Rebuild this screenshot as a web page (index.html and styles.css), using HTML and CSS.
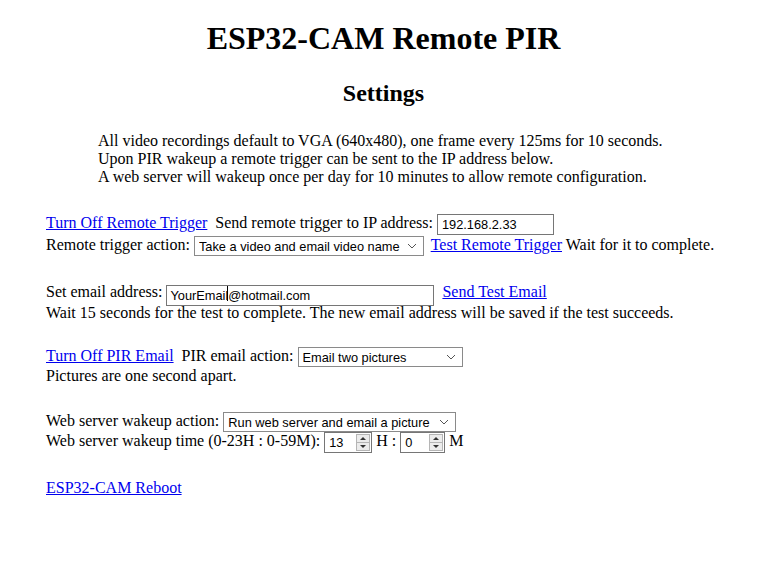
FILE: index.html
```html
<!DOCTYPE html>
<html>
<head>
<meta charset="utf-8">
<title>ESP32-CAM Remote PIR</title>
<link rel="stylesheet" href="styles.css">
</head>
<body>
<h1 class="title">ESP32-CAM Remote PIR</h1>
<h2 class="subtitle">Settings</h2>
<div class="intro">
  <div>All video recordings default to VGA (640x480), one frame every 125ms for 10 seconds.</div>
  <div>Upon PIR wakeup a remote trigger can be sent to the IP address below.</div>
  <div>A web server will wakeup once per day for 10 minutes to allow remote configuration.</div>
</div>
<div class="form">
  <div class="group g1">
    <div class="row r22"><a href="#">Turn Off Remote Trigger</a>&nbsp; Send remote trigger to IP address: <input class="ctl ip" type="text" value="192.168.2.33"></div>
    <div class="row r22">Remote trigger action: <select class="ctl sel sel-trigger"><option>Take a video and email video name</option></select> <a href="#">Test Remote Trigger</a> Wait for it to complete.</div>
  </div>
  <div class="group g2">
    <div class="row r22">Set email address: <span class="caretwrap"><input class="ctl email" type="text" value="YourEmail@hotmail.com"></span>&nbsp; <a href="#">Send Test Email</a></div>
    <div class="row r20">Wait 15 seconds for the test to complete. The new email address will be saved if the test succeeds.</div>
  </div>
  <div class="group g3">
    <div class="row r20"><a href="#">Turn Off PIR Email</a>&nbsp; PIR email action: <select class="ctl sel sel-pir"><option>Email two pictures</option></select></div>
    <div class="row r20">Pictures are one second apart.</div>
  </div>
  <div class="group g4">
    <div class="row r20">Web server wakeup action: <select class="ctl sel sel-web"><option>Run web server and email a picture</option></select></div>
    <div class="row r20">Web server wakeup time (0-23H : 0-59M): <span class="num num-h"><input class="numin" type="text" value="13"><span class="spin"><span class="up"></span><span class="down"></span></span></span> H : <span class="num num-m"><input class="numin" type="text" value="0"><span class="spin"><span class="up"></span><span class="down"></span></span></span> M</div>
  </div>
  <div class="group g5">
    <div class="row r20"><a href="#">ESP32-CAM Reboot</a></div>
  </div>
</div>
</body>
</html>
```
FILE: styles.css
```css
html, body {
  margin: 0;
  padding: 0;
  background: #fff;
}
body {
  font-family: "Liberation Serif", "Times New Roman", serif;
  font-size: 16px;
  color: #000;
}
a {
  color: #0000ee;
  text-decoration: underline;
}
.title {
  font-size: 32px;
  font-weight: bold;
  line-height: 36px;
  margin: 20px 0 0 0;
  text-align: center;
}
.subtitle {
  font-size: 24px;
  font-weight: bold;
  line-height: 28px;
  margin: 23px 0 0 0;
  text-align: center;
}
.intro {
  margin: 25px 0 0 0;
  padding-left: 98px;
  line-height: 18px;
}
.form {
  padding-left: 46px;
}
.row {
  white-space: nowrap;
}
.r22 { height: 22px; line-height: 22px; }
.r20 { height: 20px; line-height: 20px; }
.g1 { margin-top: 26px; }
.g2 { margin-top: 25px; }
.g3 { margin-top: 23px; }
.g4 { margin-top: 25px; }
.g5 { margin-top: 27px; }

.ctl {
  font-family: "Liberation Sans", Arial, sans-serif;
  font-size: 12.8px;
  color: #000;
  background: #fff;
  border: 1px solid #767676;
  border-radius: 0;
  box-sizing: border-box;
  margin: 0;
  vertical-align: middle;
  outline: none;
}
.ip {
  width: 117px;
  height: 21px;
  padding: 0 4px;
}
.email {
  width: 268px;
  height: 21px;
  padding: 0 3px;
}
.caretwrap {
  position: relative;
  display: inline-block;
  vertical-align: middle;
  height: 21px;
  line-height: 21px;
}
.caretwrap::after {
  content: "";
  position: absolute;
  left: 61px;
  top: 3px;
  width: 1px;
  height: 15px;
  background: #000;
}
.sel {
  -webkit-appearance: none;
  appearance: none;
  height: 20px;
  padding: 0 18px 0 4px;
  background-color: #fff;
  background-image: url("data:image/svg+xml;utf8,<svg xmlns='http://www.w3.org/2000/svg' width='10' height='6' viewBox='0 0 10 6'><path d='M1 1 L5 5 L9 1' fill='none' stroke='%23555' stroke-width='1'/></svg>");
  background-repeat: no-repeat;
  background-position: right 6px center;
  border-color: #8a8a8a;
}
.sel-trigger { width: 230px; margin-right: 3px; }
.sel-pir { width: 165px; }
.sel-web { width: 233px; }

.num {
  display: inline-flex;
  align-items: center;
  box-sizing: border-box;
  height: 21px;
  border: 1px solid #767676;
  background: #fff;
  vertical-align: middle;
  padding: 0 1px 0 4px;
}
.num-h { width: 48px; }
.num-m { width: 45px; }
.numin {
  flex: 1;
  min-width: 0;
  border: 0;
  padding: 0;
  margin: 0;
  outline: none;
  background: transparent;
  font-family: "Liberation Sans", Arial, sans-serif;
  font-size: 12.8px;
  color: #000;
  height: 17px;
}
.spin {
  display: flex;
  flex-direction: column;
  width: 14px;
  height: 17px;
  box-sizing: border-box;
  border: 1px solid #b5b5b5;
  background: #ececec;
}
.spin .up, .spin .down {
  flex: 1;
  position: relative;
}
.spin .up {
  border-bottom: 1px solid #b5b5b5;
}
.spin .up::after, .spin .down::after {
  content: "";
  position: absolute;
  left: 3px;
  width: 0;
  height: 0;
  border-left: 3px solid transparent;
  border-right: 3px solid transparent;
}
.spin .up::after {
  top: 2px;
  border-bottom: 3px solid #333;
}
.spin .down::after {
  top: 2px;
  border-top: 3px solid #333;
}
```
